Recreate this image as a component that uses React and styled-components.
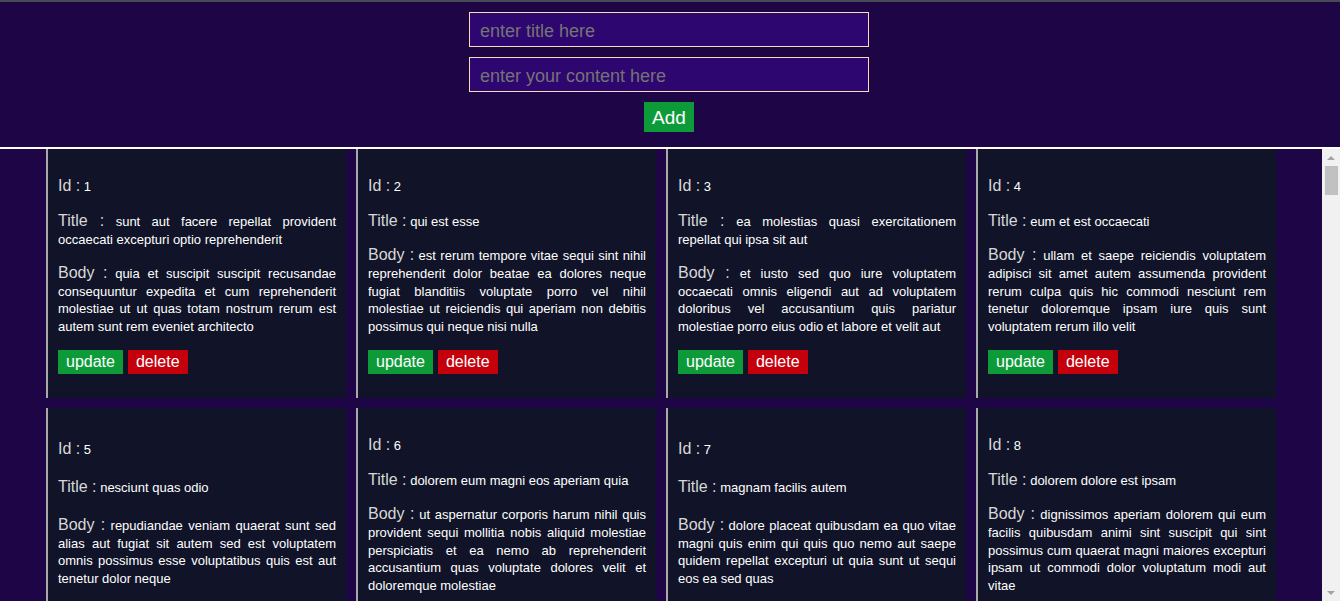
import React, { useState } from "react";
import styled, { createGlobalStyle } from "styled-components";

const GlobalStyle = createGlobalStyle`
  html, body {
    margin: 0;
    height: 100%;
    overflow: hidden;
    background: #1e0546;
    font-family: "Liberation Sans", Arial, sans-serif;
  }
`;

const posts = [
  {
    id: 1,
    title: "sunt aut facere repellat provident occaecati excepturi optio reprehenderit",
    body: "quia et suscipit suscipit recusandae consequuntur expedita et cum reprehenderit molestiae ut ut quas totam nostrum rerum est autem sunt rem eveniet architecto",
  },
  {
    id: 2,
    title: "qui est esse",
    body: "est rerum tempore vitae sequi sint nihil reprehenderit dolor beatae ea dolores neque fugiat blanditiis voluptate porro vel nihil molestiae ut reiciendis qui aperiam non debitis possimus qui neque nisi nulla",
  },
  {
    id: 3,
    title: "ea molestias quasi exercitationem repellat qui ipsa sit aut",
    body: "et iusto sed quo iure voluptatem occaecati omnis eligendi aut ad voluptatem doloribus vel accusantium quis pariatur molestiae porro eius odio et labore et velit aut",
  },
  {
    id: 4,
    title: "eum et est occaecati",
    body: "ullam et saepe reiciendis voluptatem adipisci sit amet autem assumenda provident rerum culpa quis hic commodi nesciunt rem tenetur doloremque ipsam iure quis sunt voluptatem rerum illo velit",
  },
  {
    id: 5,
    title: "nesciunt quas odio",
    body: "repudiandae veniam quaerat sunt sed alias aut fugiat sit autem sed est voluptatem omnis possimus esse voluptatibus quis est aut tenetur dolor neque",
  },
  {
    id: 6,
    title: "dolorem eum magni eos aperiam quia",
    body: "ut aspernatur corporis harum nihil quis provident sequi mollitia nobis aliquid molestiae perspiciatis et ea nemo ab reprehenderit accusantium quas voluptate dolores velit et doloremque molestiae",
  },
  {
    id: 7,
    title: "magnam facilis autem",
    body: "dolore placeat quibusdam ea quo vitae magni quis enim qui quis quo nemo aut saepe quidem repellat excepturi ut quia sunt ut sequi eos ea sed quas",
  },
  {
    id: 8,
    title: "dolorem dolore est ipsam",
    body: "dignissimos aperiam dolorem qui eum facilis quibusdam animi sint suscipit qui sint possimus cum quaerat magni maiores excepturi ipsam ut commodi dolor voluptatum modi aut vitae",
  },
];

const Page = styled.div`
  display: flex;
  flex-direction: column;
  height: 100vh;
`;

const Header = styled.header`
  display: flex;
  flex-direction: column;
  align-items: center;
  gap: 10px;
  padding: 10px 2px 15px 0;
  background: #1e0546;
  border-top: 2px solid #454b54;
  border-bottom: 2px solid #ffffff;
`;

const Input = styled.input`
  box-sizing: border-box;
  width: 400px;
  height: 35px;
  padding: 3px 10px 0;
  border: 1px solid #f5deb3;
  background: #2e0670;
  color: #ffffff;
  font-family: inherit;
  font-size: 18px;
  outline: none;

  &::placeholder {
    color: #757575;
  }
`;

const Button = styled.button`
  height: ${(p) => (p.$big ? "30px" : "24px")};
  padding: ${(p) => (p.$big ? "2px 8px 0" : "1px 8px 0")};
  border: none;
  background: ${(p) => (p.$danger ? "#c4000c" : "#0d9b3a")};
  color: #ffffff;
  font-family: inherit;
  font-size: ${(p) => (p.$big ? "19px" : "16px")};
  cursor: pointer;
`;

const Content = styled.div`
  flex: 1;
  display: flex;
  min-height: 0;
`;

const Scroller = styled.div`
  flex: 1;
  overflow: hidden;
`;

const Grid = styled.div`
  display: flex;
  flex-wrap: wrap;
  justify-content: center;
  gap: 10px;
`;

const Card = styled.div`
  box-sizing: border-box;
  width: 300px;
  height: 249px;
  padding: 13px 10px 10px;
  display: flex;
  flex-direction: column;
  justify-content: space-evenly;
  background: #111428;
  border-left: 2px solid #a9a9a9;
  color: #ffffff;
`;

const Line = styled.p`
  margin: 0;
  font-size: 13px;
  line-height: 17.5px;
  text-align: justify;
`;

const Label = styled.span`
  font-size: 16px;
  line-height: 20px;
  color: #d8d8d8;
`;

const Actions = styled.div`
  display: flex;
  gap: 5px;
`;

const Track = styled.div`
  width: 18px;
  display: flex;
  flex-direction: column;
  background: #f1f1f1;
`;

const Arrow = styled.div`
  height: 17px;
  display: flex;
  align-items: center;
  justify-content: center;

  &::before {
    content: "";
    border-left: 4px solid transparent;
    border-right: 4px solid transparent;
    ${(p) =>
      p.$down
        ? "border-top: 4px solid #a3a3a3;"
        : "border-bottom: 4px solid #a3a3a3;"}
  }
`;

const Thumb = styled.div`
  height: 29px;
  margin: 0 2px 0 3px;
  background: #c1c1c1;
`;

const Spacer = styled.div`
  flex: 1;
`;

function PostCard({ post }) {
  return (
    <Card>
      <Line>
        <Label>Id :</Label> {post.id}
      </Line>
      <Line>
        <Label>Title :</Label> {post.title}
      </Line>
      <Line>
        <Label>Body :</Label> {post.body}
      </Line>
      <Actions>
        <Button>update</Button>
        <Button $danger>delete</Button>
      </Actions>
    </Card>
  );
}

export default function App() {
  const [title, setTitle] = useState("");
  const [content, setContent] = useState("");

  return (
    <Page>
      <GlobalStyle />
      <Header>
        <Input
          placeholder="enter title here"
          value={title}
          onChange={(e) => setTitle(e.target.value)}
        />
        <Input
          placeholder="enter your content here"
          value={content}
          onChange={(e) => setContent(e.target.value)}
        />
        <Button $big>Add</Button>
      </Header>
      <Content>
        <Scroller>
          <Grid>
            {posts.map((post) => (
              <PostCard key={post.id} post={post} />
            ))}
          </Grid>
        </Scroller>
        <Track>
          <Arrow />
          <Thumb />
          <Spacer />
          <Arrow $down />
        </Track>
      </Content>
    </Page>
  );
}
